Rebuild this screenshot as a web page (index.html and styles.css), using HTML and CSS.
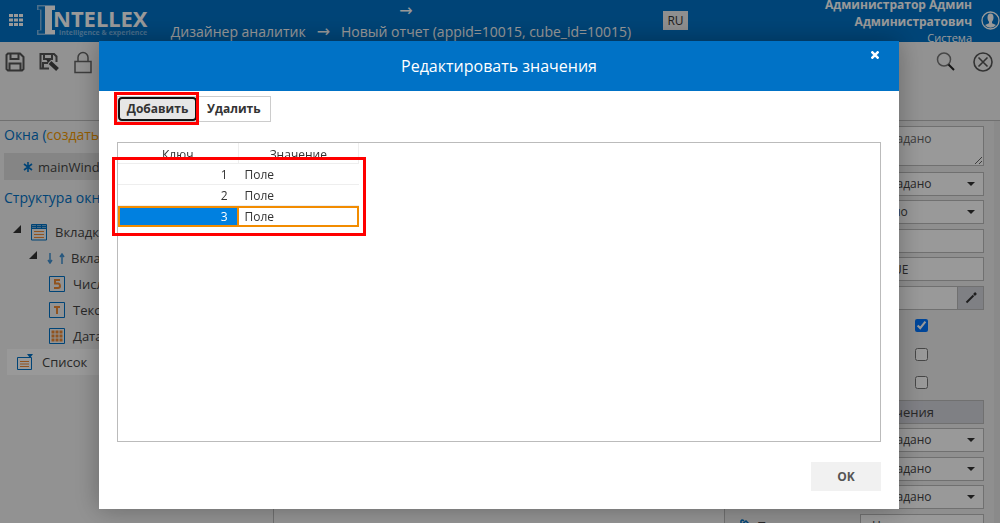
FILE: index.html
```html
<!DOCTYPE html>
<html lang="ru">
<head>
<meta charset="utf-8">
<title>Intellex — Дизайнер аналитик</title>
<link rel="stylesheet" href="styles.css">
</head>
<body>
<div class="app">
  <header class="topbar">
    <svg class="apps" width="14" height="12" viewBox="0 0 14 12" fill="#fff"><path d="M0 0h4v3H0zM5 0h4v3H5zM10 0h4v3h-4zM0 4.500h4v3H0zM5 4.500h4v3H5zM10 4.500h4v3h-4zM0 9h4v3H0zM5 9h4v3H5zM10 9h4v3h-4z"/></svg>
    <div class="logo">
      <svg width="18" height="30" viewBox="0 0 18 30"><path d="M0 0h18v5h-3v20h3v5H0v-5h3V5H0z" fill="#7fb9e6"/><path d="M1.500 1.500h8v27h-8v-3h3v-21h-3z" fill="#0a78c8"/><path d="M8 1h10v4h-3v20h3v4H8z" fill="#fff"/></svg>
      <div class="logo-words"><span class="logo-name">NTELLEX</span><span class="logo-tag">intelligence &amp; experience</span></div>
    </div>
    <nav class="crumbs"><div class="arrow">→</div><div><span>Дизайнер аналитик</span><span class="arrow">→</span><span>Новый отчет (appid=10015, cube_id=10015)</span></div></nav>
    <button class="lang">RU</button>
    <div class="user"><b>Администратор Админ<br>Администратович</b><span>Система</span></div>
    <svg class="avatar" width="19" height="19" viewBox="0 0 19 19"><circle cx="9.500" cy="9.500" r="8.500" fill="none" stroke="#fff" stroke-width="1.300"/><path d="M6.500 6.500a3 4 0 0 1 6 0c0 2-.8 3.500-1.500 4.200v1.500l4 1.800a7 7 0 0 1-11 0l4-1.800v-1.500c-.7-.7-1.500-2.200-1.500-4.200z" fill="#fff"/></svg>
  </header>

  <div class="toolbar">
    <svg width="20" height="20" viewBox="0 0 20 20" fill="none" stroke="#555" stroke-width="2"><path d="M3 1.500h12l3.500 3.500v12l-1.500 1.500H3L1.500 17V3zM5.500 2v5h8V2M4.500 18v-6.500h11V18"/></svg>
    <svg width="20" height="20" viewBox="0 0 20 20" fill="none" stroke="#555" stroke-width="2"><path d="M17.500 10V4.500L15 2H1.500v14.500H10M5 2.500v4.500h8V2.500M4 16v-5h5"/><path d="M11 10.500l7.500 7" stroke="#444" stroke-width="4"/><path d="M7 7l5 1-3 3z" fill="#444" stroke="none"/></svg>
    <svg class="lock" width="20" height="24" viewBox="0 0 20 24" fill="none" stroke="#666" stroke-width="1.500"><path d="M2 10.500h16v11H2zM5 10V6.500a5 5 0 0 1 10 0V10"/></svg>
    <span class="spring"></span>
    <svg class="search" width="20" height="20" viewBox="0 0 20 20" fill="none"><circle cx="8" cy="7.500" r="6.500" stroke="#777" stroke-width="1.500"/><path d="M12.500 12.500l5.500 5.500" stroke="#222" stroke-width="2"/></svg>
    <svg width="20" height="20" viewBox="0 0 20 20" fill="none" stroke="#555" stroke-width="1.600"><circle cx="10" cy="10" r="9"/><path d="M5.500 5.500l9 9M14.500 5.500l-9 9"/></svg>
  </div>

  <div class="work">
    <aside class="left">
      <h2>Окна (<a href="#">создать</a>)</h2>
      <button class="tab"><svg width="10" height="10" viewBox="0 0 10 10" stroke="#0072c6" stroke-width="1.600"><path d="M5 0v10M1 2l8 6M9 2L1 8"/></svg>mainWindow</button>
      <h2 class="second">Структура окна</h2>
      <ul class="tree">
        <li class="l1"><svg class="exp" width="8" height="8"><path d="M8 0v8H0z" fill="#333"/></svg><svg width="16" height="17" viewBox="0 0 16 17" fill="none" stroke="#0072c6"><path d="M.5.5h15v15.500H.5zM.5 4.500h15M5.500.5v4M10.500.5v4"/><path d="M1 2.500h14" stroke-width="2" stroke-dasharray="4 1"/><path d="M3 7.500h10M3 10.500h10M3 13.500h10" stroke="#f08b35"/></svg><span>Вкладки</span></li>
        <li class="l2"><svg class="exp" width="8" height="8"><path d="M8 0v8H0z" fill="#333"/></svg><svg width="18" height="11" viewBox="0 0 18 11" fill="none" stroke="#4292d2" stroke-width="1.500"><path d="M3 0v10M1 7l2 3 2-3M15 11V1M13 4l2-3 2 3"/></svg><span>Вкладка</span></li>
        <li class="l3"><svg width="16" height="16" viewBox="0 0 16 16" fill="none" stroke="#0072c6"><path d="M.5.5h15v15H.5z"/><path d="M11 4H6v3.500h3.500Q11 8 11 10q0 2-2 2H5" stroke="#f08b35" stroke-width="2"/></svg><span>Число</span></li>
        <li class="l3"><svg width="16" height="16" viewBox="0 0 16 16" fill="none" stroke="#0072c6"><path d="M.5.5h15v15H.5z"/><path d="M5 5h6M8 5v7" stroke="#f08b35" stroke-width="2"/></svg><span>Текст</span></li>
        <li class="l3"><svg width="16" height="16" viewBox="0 0 16 16" fill="none" stroke="#0072c6"><path d="M.5.5h15v15H.5z"/><path d="M2.500 4h11M2.500 8h11M2.500 12h11" stroke="#f08b35" stroke-width="3" stroke-dasharray="3 1"/></svg><span>Дата</span></li>
        <li class="l0 active"><svg width="17" height="16" viewBox="0 0 17 16" fill="none" stroke="#0072c6"><path d="M.5 3.500h14v12H.5z"/><path d="M10 0h6l-3 4z" fill="#0072c6" stroke="none"/><path d="M3 7.500h9M3 10h9M3 12.500h9" stroke="#f08b35"/></svg><span>Список</span></li>
      </ul>
    </aside>
    <main class="canvas"></main>
    <aside class="props">
      <div class="first"><label for="p0">Описание</label><textarea id="p0">Не задано</textarea></div>
      <div class="prop"><label for="p1">Шрифт</label><select id="p1"><option>Не задано</option></select></div>
      <div class="prop"><label for="p2">Тип</label><select id="p2"><option>Число</option></select></div>
      <div class="prop"><label for="p3">Высота</label><input id="p3" type="text"></div>
      <div class="prop"><label for="p4">Видимость</label><input id="p4" type="text" value="=TRUE"></div>
      <div class="prop"><label for="p5">Условие</label><div class="combo"><input id="p5" type="text"><button aria-label="Изменить"><svg width="12" height="12" viewBox="0 0 12 12" stroke="#333"><path d="M1.500 10.500l7-7" stroke-width="2"/><path d="M9 3l2-2" stroke-width="2.500"/></svg></button></div></div>
      <div class="prop"><label for="p6">Активно</label><input id="p6" type="checkbox" checked></div>
      <div class="prop"><label for="p7">Скрыто</label><input id="p7" type="checkbox"></div>
      <div class="prop"><label for="p8">Сортировка</label><input id="p8" type="checkbox"></div>
      <div class="prop"><span>Список</span><button class="wide">Значения</button></div>
      <div class="prop"><label for="p9">Цвет</label><select id="p9"><option>Не задано</option></select></div>
      <div class="prop"><label for="p10">Фон</label><select id="p10"><option>Не задано</option></select></div>
      <div class="prop"><label for="p11">Рамка</label><select id="p11"><option>Не задано</option></select></div>
      <div class="prop"><label for="p12"><svg width="14" height="14" viewBox="0 0 14 14" fill="none" stroke="#0072c6" stroke-width="1.500"><path d="M2 6l5-4 5 5-5 5-5-5V2q1-2 3 0"/><path d="M12 8l1 4"/></svg>Подсветка</label><select id="p12"><option>Не задано</option></select></div>
    </aside>
    <div class="gutter"></div>
  </div>
</div>

<div class="backdrop">
  <section class="modal" role="dialog" aria-labelledby="title">
    <header class="modal-head"><h1 id="title">Редактировать значения</h1><button class="close" aria-label="Закрыть"><svg width="8" height="8" viewBox="0 0 8 8" stroke="#fff" stroke-width="2.500"><path d="M.5.5l7 7M7.500.5l-7 7"/></svg></button></header>
    <div class="modal-body">
      <div class="actions"><div class="marked"><button class="add">Добавить</button><i class="mark"></i></div><button>Удалить</button></div>
      <div class="grid">
        <table>
          <thead><tr><th>Ключ</th><th>Значение</th></tr></thead>
          <tbody>
            <tr><td class="key">1</td><td>Поле</td></tr>
            <tr><td class="key">2</td><td>Поле</td></tr>
            <tr class="sel"><td class="key">3</td><td>Поле</td></tr>
          </tbody>
        </table>
        <i class="mark"></i>
      </div>
      <footer><button class="ok">OK</button></footer>
    </div>
  </section>
</div>
</body>
</html>
```
FILE: styles.css
```css
* { box-sizing: border-box; }
body { margin: 0; height: 100vh; overflow: hidden; font: 13px/18px "Open Sans", "Noto Sans", sans-serif; color: #444; }
button, input, select, textarea { font: inherit; color: inherit; border-radius: 0; margin: 0; }
svg { display: block; flex: none; }
.app { height: 100vh; display: flex; flex-direction: column; background: #f3f3f3; }

.topbar { flex: none; height: 42px; display: flex; align-items: flex-start; background: #0072c6; color: #fff; overflow: hidden; }
.apps { margin: 14px 14px 0 9px; }
.logo { display: flex; width: 115px; margin-top: 5px; }
.logo-words { display: flex; flex-direction: column; margin-left: -2px; padding-top: 4px; white-space: nowrap; }
.logo-name { font: bold 22px/18px "Noto Sans", sans-serif; }
.logo-tag { font: bold 7px/10px "Open Sans", sans-serif; color: #77b4e4; padding: 1px 0 0 6px; }
.crumbs { margin-left: 15px; width: 468px; text-align: center; font-size: 14px; line-height: 21px; white-space: nowrap; }
.crumbs .arrow { font-family: "DejaVu Sans", sans-serif; font-size: 16px; }
.crumbs span.arrow { margin: 0 11px; }
.crumbs div.arrow { padding-left: 10px; }
.lang { margin: 11px 0 0 28px; width: 25px; height: 19px; border: 0; padding: 0; background: #eee; color: #333; font-size: 12px; }
.user { margin: -4px 9px 0 auto; display: flex; flex-direction: column; text-align: right; font-size: 12px; line-height: 17px; }
.user span { font-size: 11px; line-height: 16px; }
.avatar { margin: 11px 0 0; }

.toolbar { flex: none; height: 79px; display: flex; align-items: flex-start; gap: 14px; padding: 10px 7px 0 5px; border-bottom: 1px solid #bbb; }
.lock { margin-top: -1px; }
.spring { flex: 1; }
.search { margin-right: 3px; }

.work { flex: 1; min-height: 0; display: flex; overflow: hidden; }
.left { width: 274px; flex: none; padding: 4px 4px 0; border-right: 1px solid #bbb; }
.left h2 { margin: 0; font-size: 14px; line-height: 20px; font-weight: normal; color: #0072c6; }
.left h2 a { color: #f59a00; text-decoration: none; }
.tab { display: flex; align-items: center; gap: 5px; width: 160px; height: 27px; margin-top: 8px; padding: 0 19px; border: 0; background: #dedede; }
.left .second { margin-top: 8px; }
.tree { list-style: none; margin: 11px 0 0; padding: 0 0 0 3px; }
.tree li { display: flex; align-items: center; gap: 8px; height: 26px; }
.tree .exp { margin-right: 2px; margin-bottom: 6px; }
.l1 { padding-left: 6px; }
.l2 { padding-left: 22px; }
.l2 .exp + svg { margin-right: -2px; }
.l3 { padding-left: 42px; }
.l0 { padding-left: 10px; }
.active { background: #fff; }
.canvas { flex: 1; background: #f6f6f6; }
.props { width: 260px; flex: none; padding: 5px 0 0 14px; background: #eee; border-left: 1px solid #bbb; }
.gutter { width: 16px; flex: none; background: #eee; border-right: 6px solid #e6e6e6; }
.first, .prop { display: grid; grid-template-columns: 1fr 124px; align-items: start; }
.first { height: 46px; }
.prop { height: 28px; }
.prop:nth-child(odd) { height: 29px; }
.props label { display: flex; gap: 4px; align-items: center; line-height: 24px; }
.props textarea, .props select, .props input[type=text] { width: 100%; height: 24px; border: 1px solid #bbb; background: #fff; padding: 0 11px; font-size: 12px; }
.props textarea { display: block; height: 40px; padding: 3px 11px; color: #666; }
.props select { appearance: none; background: #fff url("data:image/svg+xml,%3Csvg xmlns='http://www.w3.org/2000/svg' width='8' height='4'%3E%3Cpath d='M0 0h8L4 4z' fill='%23333'/%3E%3C/svg%3E") no-repeat right 8px center; }
.combo { display: flex; }
.combo button { width: 26px; flex: none; height: 24px; display: grid; place-items: center; padding: 0; border: 1px solid #bbb; border-left: 0; background: #d4d5dd; }
.props input[type=checkbox] { width: 13px; height: 13px; margin: 5px 0 0 55px; }
.wide { height: 24px; border: 1px solid #bbb; background: #d4d5dd; text-align: left; padding: 0 11px; font-size: 13px; }

.backdrop { position: fixed; inset: 0; background: rgba(0, 0, 0, .4); display: flex; justify-content: center; align-items: flex-start; padding: 41px 2px 0 0; }
.modal { width: 100%; max-width: 800px; background: #fff; box-shadow: 0 0 24px rgba(0, 0, 0, .3); }
.modal-head { display: grid; grid-template-columns: 1fr auto 1fr; height: 50px; background: #0072c6; color: #fff; }
.modal-head h1 { grid-column: 2; margin: 0; font-size: 16px; line-height: 50px; font-weight: normal; }
.close { justify-self: end; align-self: start; width: 20px; height: 20px; margin: 4px 14px 0 0; border: 0; padding: 0; background: none; display: grid; place-items: center; }
.modal-body { padding: 5px 18px 18px; color: #333; }
.actions { display: flex; height: 26px; width: max-content; border: 1px solid #ccc; }
.actions button { height: 24px; padding: 0 9px 0 10px; border: 0; background: #fff; font-size: 12px; font-weight: bold; }
.marked { position: relative; display: flex; }
.actions .add { width: 79px; padding: 0; background: #e6e6e6; border: 2px solid #111; border-radius: 4px; }
.mark { position: absolute; border: 3px solid red; pointer-events: none; }
.marked .mark { inset: -5px -2px -4px -4px; }
.grid { position: relative; height: 300px; margin-top: 20px; border: 1px solid #bbb; font-size: 12px; }
.grid .mark { left: -6px; top: 14px; width: 254px; height: 79px; }
table { border-collapse: separate; border-spacing: 0; table-layout: fixed; width: 241px; line-height: 17px; }
th { font-weight: normal; height: 21px; padding: 3px 0 0; border: 1px solid #eee; border-width: 0 1px 1px 0; }
td { height: 21px; padding: 0 6px; border-bottom: 1px solid #eee; }
.key { text-align: right; padding-right: 11px; }
.sel td { border: 2px solid #f28c00; border-left-width: 0; }
.sel .key { background: #0080e0; color: #fff; border-left-width: 2px; padding-right: 9px; }
.modal footer { display: flex; justify-content: flex-end; margin-top: 20px; }
.ok { width: 70px; height: 29px; border: 0; background: #f1f1f1; color: #555; font-size: 12px; font-weight: bold; }
```
